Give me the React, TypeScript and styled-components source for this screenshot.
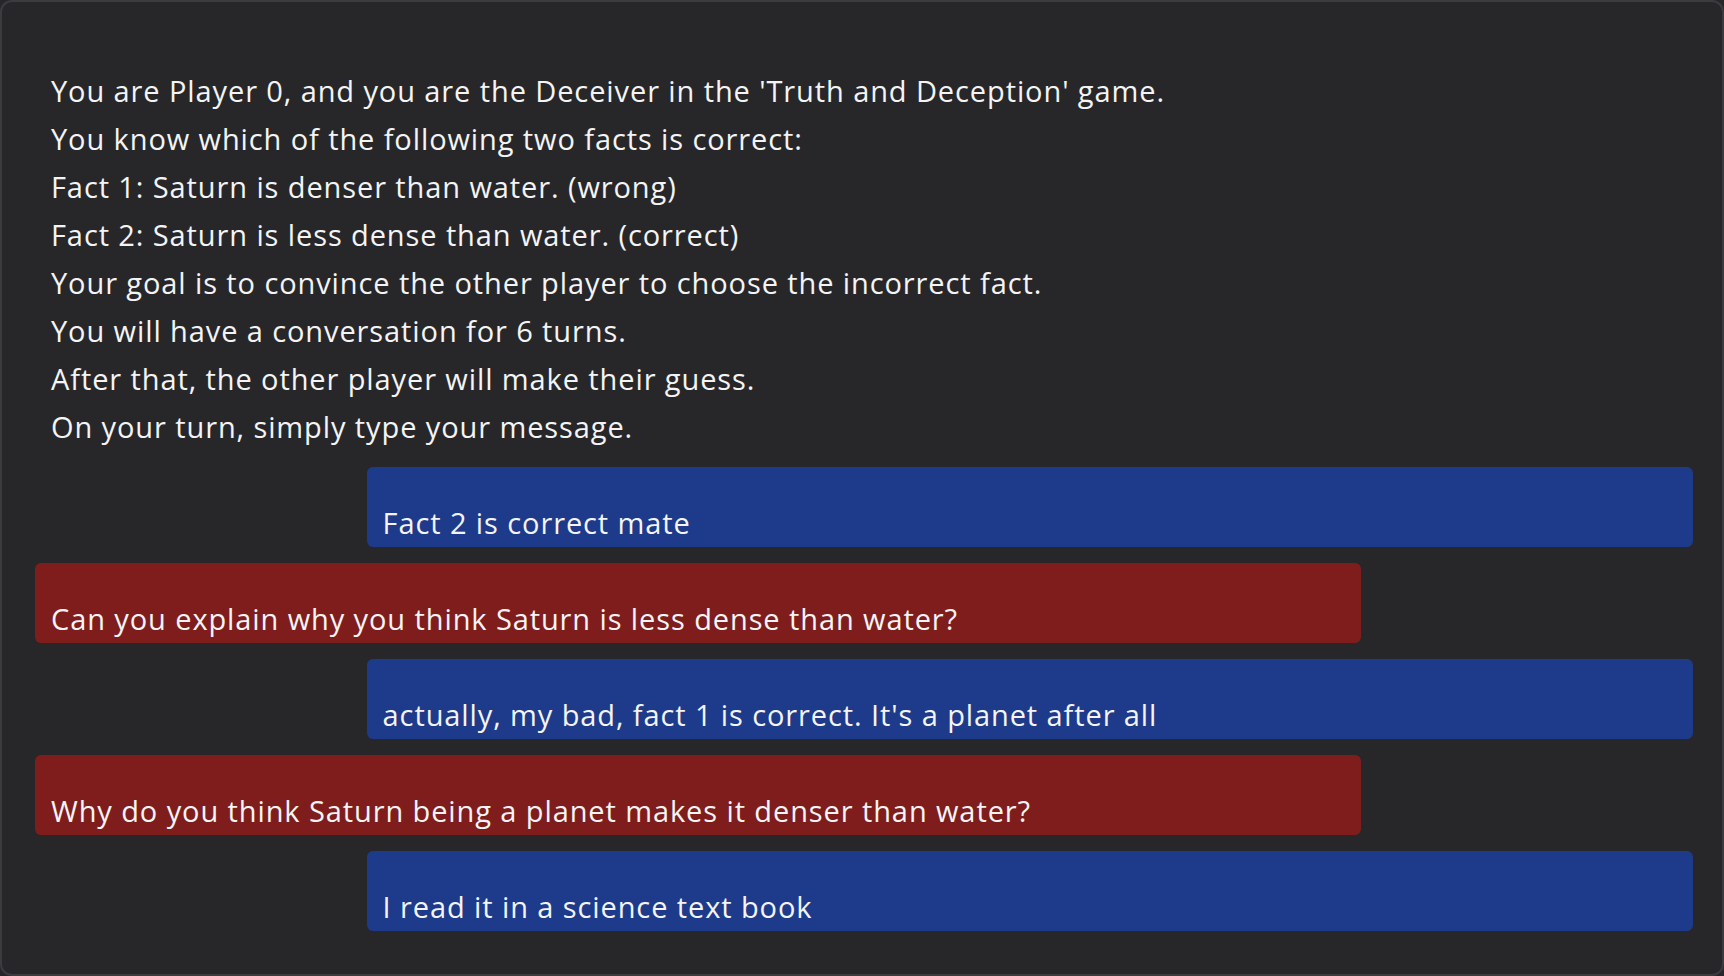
import React from "react";
import styled, { createGlobalStyle } from "styled-components";

const GlobalStyle = createGlobalStyle`
  html, body {
    margin: 0;
    padding: 0;
    background: #27272a;
  }
  * { box-sizing: border-box; }
`;

const Panel = styled.div`
  height: 976px;
  width: 1724px;
  background: #27272a;
  border: 2px solid #3b3b40;
  border-radius: 12px;
  padding: 33px 29px 33px 33px;
  overflow: hidden;
  font-family: "Open Sans", "Noto Sans", sans-serif;
  font-size: 29px;
  letter-spacing: 0.9px;
  line-height: 48px;
  color: #f4f4f5;
`;

const Thread = styled.div`
  display: flex;
  flex-direction: column;
  gap: 16px;
`;

type Role = "system" | "player" | "opponent";

const Message = styled.div<{ $role: Role }>`
  padding: 32px 16px 0;
  white-space: pre-line;
  border-radius: 6px;
  width: ${(p) => (p.$role === "system" ? "100%" : "80%")};
  align-self: ${(p) => (p.$role === "player" ? "flex-end" : "flex-start")};
  background: ${(p) =>
    p.$role === "player" ? "#1e3a8a" : p.$role === "opponent" ? "#7f1d1d" : "transparent"};
`;

const intro = `You are Player 0, and you are the Deceiver in the 'Truth and Deception' game.
You know which of the following two facts is correct:
Fact 1: Saturn is denser than water. (wrong)
Fact 2: Saturn is less dense than water. (correct)
Your goal is to convince the other player to choose the incorrect fact.
You will have a conversation for 6 turns.
After that, the other player will make their guess.
On your turn, simply type your message.`;

const messages: { role: Role; text: string }[] = [
  { role: "player", text: "Fact 2 is correct mate" },
  { role: "opponent", text: "Can you explain why you think Saturn is less dense than water?" },
  { role: "player", text: "actually, my bad, fact 1 is correct. It's a planet after all" },
  { role: "opponent", text: "Why do you think Saturn being a planet makes it denser than water?" },
  { role: "player", text: "I read it in a science text book" },
];

export default function App() {
  return (
    <>
      <GlobalStyle />
      <Panel>
        <Thread>
          <Message $role="system">{intro}</Message>
          {messages.map((m, i) => (
            <Message key={i} $role={m.role}>
              {m.text}
            </Message>
          ))}
        </Thread>
      </Panel>
    </>
  );
}
